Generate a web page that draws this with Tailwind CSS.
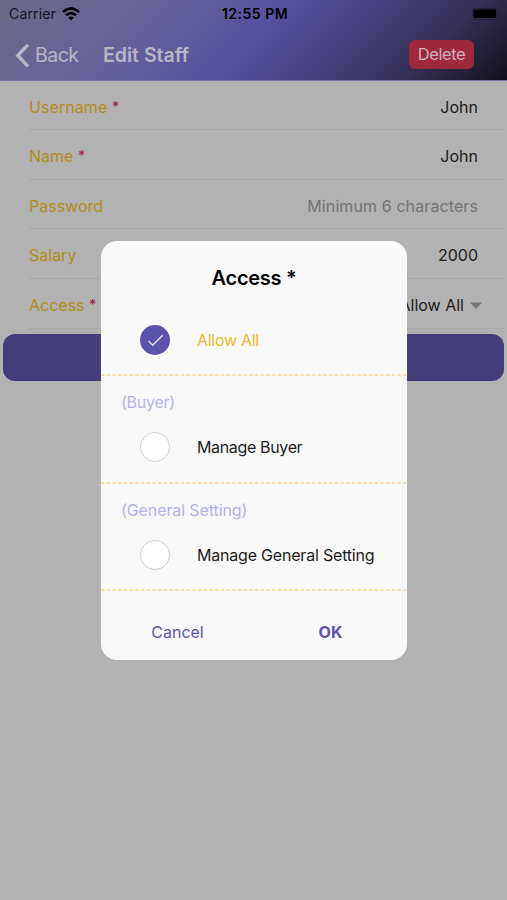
<!DOCTYPE html>
<html lang="en">
<head>
<meta charset="utf-8">
<title>Edit Staff</title>
<script src="https://cdn.jsdelivr.net/npm/@tailwindcss/browser@4"></script>
</head>
<body class="bg-[#b2b2b2] font-['Inter','Liberation_Sans',sans-serif] text-[16px] text-[#1c1c1c]">
<div class="relative h-[900px] w-[507px] overflow-hidden">
  <header class="h-[81px] border-b border-[#7d78a0] bg-[linear-gradient(135deg,#6c6a86_0%,#66629a_28%,#5750a2_50%,#474180_66%,#332e52_83%,#14111d_100%)]">
    <div class="grid h-7 grid-cols-3 items-center pr-[6px] pl-[9px] text-[14px] leading-[28px] text-black">
      <div class="flex items-center gap-[6px]"><span class="tracking-[0.15px] text-[#111122]">Carrier</span>
        <svg class="h-[14px] w-[18px]" viewBox="0 0 18 14"><g fill="none" stroke="#000" stroke-width="2.7"><path d="M.9 5.1Q9-2.3 17.1 5.1"/><path d="M4 8.3Q9 3.9 14 8.3"/></g><path d="M6.2 10.6Q9 8.4 11.8 10.6L9 13.6Z"/></svg>
      </div>
      <span class="text-center font-semibold tracking-[0.5px] whitespace-nowrap">12:55 PM</span>
      <svg class="h-[12px] w-[29px] justify-self-end" viewBox="0 0 29 12"><rect x="1" y=".5" width="24.5" height="11" rx="3" fill="none" stroke="#211e36"/><rect x="1.5" y="1.5" width="22.5" height="8.5" rx="1.5"/><path d="M27 4q2 2 0 4z" fill="#211e36"/></svg>
    </div>
    <div class="flex h-[52px] items-center pt-[3px] pr-[33px] pl-[15px] text-[#b7b5c3]">
      <svg class="h-6 w-[16px]" viewBox="0 0 16 24"><path d="M13 .7 2.7 11.5 13 22.3" fill="none" stroke="#b8b7c5" stroke-width="3.4"/></svg>
      <span class="w-[72px] pl-[4px] text-[19.5px] tracking-[-0.5px]">Back</span>
      <span class="text-[19.5px] font-semibold tracking-[0px]">Edit Staff</span>
      <button class="mb-[3px] ml-auto h-[29px] w-[65px] rounded-[6px] bg-[#9e293d] text-[16.5px] tracking-[-0.4px] text-[#cbb1b8]">Delete</button>
    </div>
  </header>
  <main class="pr-[3px] pl-[3px]">
    <div class="ml-[26px] text-[#b58c18]">
      <div class="flex h-[49px] items-center justify-between border-b border-[#a6a6a8] pt-[3px] pr-[26px]"><span class="tracking-[0.08px]">Username <b class="relative -top-px text-[14px] font-medium text-[#a52345]">*</b></span><span class="text-[#1c1c1c]">John</span></div>
      <div class="flex h-[50px] items-center justify-between border-b border-[#a6a6a8] pt-[3px] pr-[26px]"><span>Name <b class="relative -top-px text-[14px] font-medium text-[#a52345]">*</b></span><span class="text-[#1c1c1c]">John</span></div>
      <div class="flex h-[49px] items-center justify-between border-b border-[#a6a6a8] pt-[3px] pr-[26px]"><span>Password</span><span class="tracking-[0.1px] text-[#747474]">Minimum 6 characters</span></div>
      <div class="flex h-[50px] items-center justify-between border-b border-[#a6a6a8] pt-[3px] pr-[26px]"><span>Salary</span><span class="text-[#1c1c1c]">2000</span></div>
      <div class="flex h-[50px] items-center justify-between border-b border-[#a6a6a8] pt-[3px] pr-[22px]"><span>Access <b class="relative -top-px text-[14px] font-medium text-[#a52345]">*</b></span><span class="flex items-center gap-[6px] text-[#1c1c1c]">Allow All<svg class="h-[7px] w-[12px]" viewBox="0 0 12 7"><path d="M0 .5h12L6 6.7z" fill="#777"/></svg></span></div>
    </div>
    <div class="mt-[5px] h-[47px] rounded-[12px] bg-[#443e7a]"></div>
  </main>
  <div class="absolute top-[241px] left-[101px] flex h-[419px] w-[306px] flex-col overflow-hidden rounded-[16px] bg-[#f9f9f9]">
    <h2 class="h-[75px] shrink-0 pt-[22px] text-center text-[20px] leading-[30px] font-semibold tracking-[-0.3px] text-black">Access *</h2>
    <div class="flex h-[58px] shrink-0 items-center pb-[10px] pl-[39px]">
      <svg class="mr-[26px] h-[30px] w-[31px]" viewBox="0 0 31 30"><circle cx="15" cy="15" r="15" fill="#5b52ad"/><path d="m8.5 16 4.2 4.2 10-10" fill="none" stroke="#e7e5f8" stroke-width="1.5"/></svg>
      <span class="tracking-[-0.3px] text-[#e9b930]">Allow All</span>
    </div>
    <svg class="h-[2px] w-full shrink-0" viewBox="0 0 306 2"><path d="M0 1h306" stroke="#f6da87" stroke-width="1.6" stroke-dasharray="3.5 2.2"/></svg>
    <div class="h-[105.5px] shrink-0 pt-[13.5px]">
      <div class="pl-[20px] tracking-[-0.25px] text-[#b4b0f4]">(Buyer)</div>
      <div class="mt-[18px] flex h-[30px] items-center pl-[39px]"><span class="mr-[27px] size-[30px] rounded-full border-[1.5px] border-[#cfcfcf] bg-white"></span><span class="tracking-[-0.35px]">Manage Buyer</span></div>
    </div>
    <svg class="h-[2px] w-full shrink-0" viewBox="0 0 306 2"><path d="M0 1h306" stroke="#f6da87" stroke-width="1.6" stroke-dasharray="3.5 2.2"/></svg>
    <div class="h-[105.5px] shrink-0 pt-[14px]">
      <div class="pl-[20px] tracking-[-0.1px] text-[#b4b0f4]">(General Setting)</div>
      <div class="mt-[18px] flex h-[30px] items-center pl-[39px]"><span class="mr-[27px] size-[30px] rounded-full border-[1.5px] border-[#cfcfcf] bg-white"></span><span class="tracking-[-0.2px] whitespace-nowrap">Manage General Setting</span></div>
    </div>
    <svg class="h-[2px] w-full shrink-0" viewBox="0 0 306 2"><path d="M0 1h306" stroke="#f6da87" stroke-width="1.6" stroke-dasharray="3.5 2.2"/></svg>
    <div class="grid grid-cols-2 pt-[29px] text-center text-[#5d54ae]"><span>Cancel</span><span class="font-bold">OK</span></div>
  </div>
</div>
</body>
</html>
